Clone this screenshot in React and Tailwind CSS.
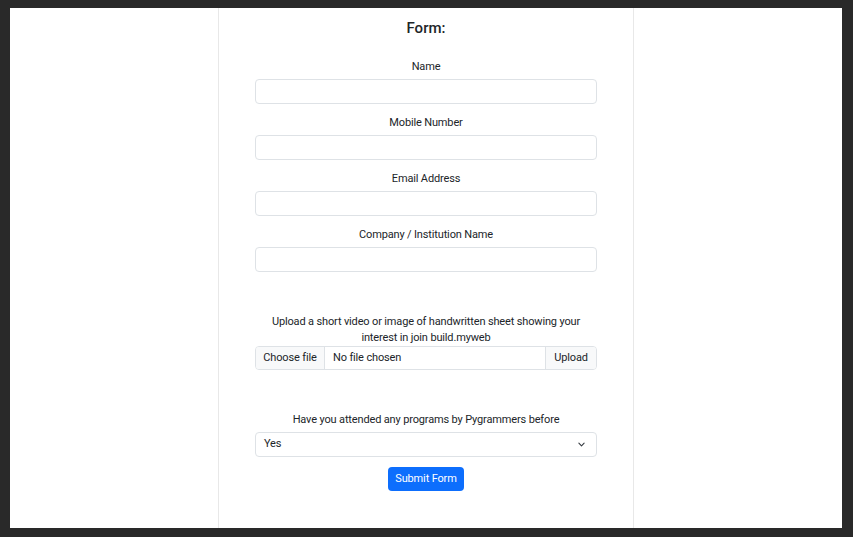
import React from 'react';

const fields = ['Name', 'Mobile Number', 'Email Address', 'Company / Institution Name'];

const App = () => {
  return (
    <div className="w-[853px] h-[537px] bg-[#292929] pt-[8px] pl-[10px] pr-[11px] pb-[9px]" style={{ fontFamily: 'Roboto, sans-serif' }}>
      <div className="h-full bg-white flex justify-center">
        <div className="w-[416px] h-full border-x border-[#e8e8e8] px-9 text-[#212529] text-center tracking-[-0.15px]">
          {/* Heading */}
          <h2 className="mt-[10px] h-[20px] leading-[20px] text-[15px] font-medium tracking-normal">Form:</h2>

          <div className="mt-[19px]">
            {fields.map((f) => (
              <div key={f} className="mb-[9px]">
                <label className="block h-[18px] pt-[1px] leading-[17px] text-[11px] mb-[4px]">{f}</label>
                <input className="block w-full h-[25px] border border-[#dee2e6] rounded-[4px] outline-none" />
              </div>
            ))}
          </div>

          {/* Upload */}
          <p className="mt-[42px] text-[11px] leading-[16px]">
            Upload a short video or image of handwritten sheet showing your interest in join build.myweb
          </p>
          <div className="flex h-[24px] border border-[#dee2e6] rounded-[4px] text-[11px] text-left overflow-hidden">
            <div className="w-[69px] bg-[#f8f9fa] border-r border-[#dee2e6] flex items-center justify-center">Choose file</div>
            <div className="flex-1 flex items-center pl-2">No file chosen</div>
            <div className="w-[51px] bg-[#f8f9fa] border-l border-[#dee2e6] flex items-center justify-center">Upload</div>
          </div>

          {/* Select */}
          <label className="block mt-[40px] h-[18px] pt-[1px] leading-[17px] text-[11px] mb-[4px]">
            Have you attended any programs by Pygrammers before
          </label>
          <div className="flex items-center justify-between h-[25px] border border-[#dee2e6] rounded-[4px] pl-2 pr-[10px] text-[11px]">
            <span>Yes</span>
            <svg width="9" height="7" viewBox="0 0 16 16" fill="none" stroke="#343a40" strokeWidth="2.5" strokeLinecap="round" strokeLinejoin="round">
              <path d="M2 5l6 6 6-6" />
            </svg>
          </div>

          <button className="mt-[10px] w-[76px] h-[24px] bg-[#0d6efd] text-white text-[11px] rounded-[4px]">
            Submit Form
          </button>
        </div>
      </div>
    </div>
  );
};

export default App;
